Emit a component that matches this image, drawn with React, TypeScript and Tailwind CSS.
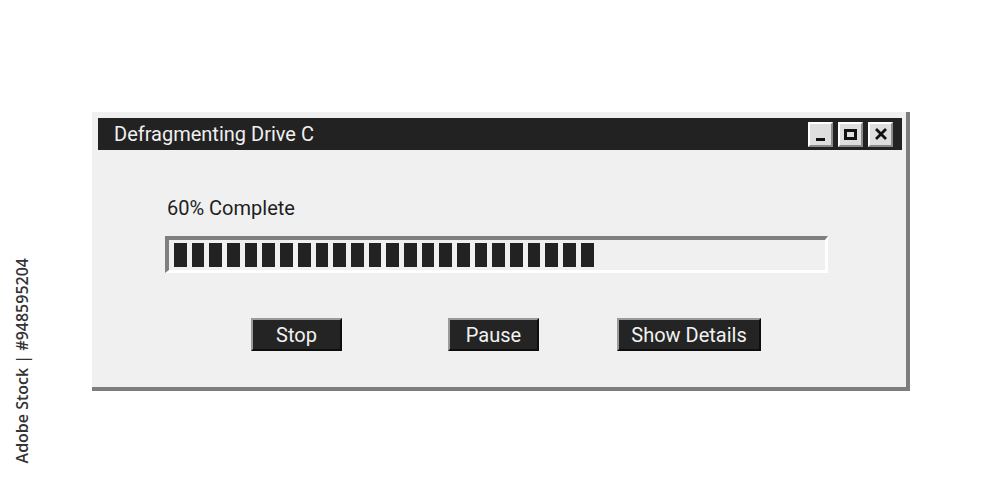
const TitleButton = ({ children }: { children: React.ReactNode }) => (
  <div className="flex h-[25px] w-[25px] items-center justify-center border-2 border-t-white border-l-white border-r-[#8a8a8a] border-b-[#8a8a8a] bg-[#dedede]">
    {children}
  </div>
);

const ActionButton = ({ label, className = "" }: { label: string; className?: string }) => (
  <button
    type="button"
    className={`flex h-[33px] items-center justify-center border-2 border-t-[#9a9a9a] border-l-[#9a9a9a] border-r-[#0e0e0e] border-b-[#0e0e0e] bg-[#242424] text-[20px] leading-none text-[#f2f2f2] ${className}`}
  >
    {label}
  </button>
);

export default function App() {
  const blocks = Array.from({ length: 24 });

  return (
    <div className="relative h-[500px] w-[1000px] overflow-hidden bg-white font-['Roboto',sans-serif]">
      <div className="ml-[92px] pt-[112px]">
        <div className="h-[279px] w-[818px] border-r-4 border-b-4 border-[#7d7d7d] bg-[#f0f0f0] pt-[6px] pr-[4px] pl-[6px]">
          <div className="flex h-[32px] items-center justify-between bg-[#222222] pr-[9px] pl-[16px]">
            <span className="text-[20px] leading-none text-[#f0f0f0]">Defragmenting Drive C</span>
            <div className="flex gap-[5px]">
              <TitleButton>
                <div className="mt-[10px] h-[3px] w-[9px] bg-[#111]" />
              </TitleButton>
              <TitleButton>
                <div className="h-[11px] w-[13px] border-[3px] border-[#111]" />
              </TitleButton>
              <TitleButton>
                <svg viewBox="0 0 12 12" className="h-[12px] w-[12px]" stroke="#111" strokeWidth="2.8" strokeLinecap="square">
                  <path d="M2 2l8 8M10 2l-8 8" />
                </svg>
              </TitleButton>
            </div>
          </div>

          <div className="pl-[67px]">
            <p className="mt-[46px] ml-[2px] text-[20px] leading-[24px] text-[#1e1e1e]">60% Complete</p>

            <div className="mt-[16px] flex h-[37px] w-[663px] gap-[5px] border-t-4 border-l-4 border-r-[3px] border-b-[3px] border-t-[#7f7f7f] border-l-[#7f7f7f] border-r-white border-b-white bg-[#f0f0f0] pt-[3px] pl-[5px]">
              {blocks.map((_, i) => (
                <div key={i} className="h-[24px] w-[12.7px] shrink-0 bg-[#222222]" />
              ))}
            </div>

            <div className="mt-[45px] flex">
              <ActionButton label="Stop" className="ml-[86px] w-[91px]" />
              <ActionButton label="Pause" className="ml-[106px] w-[91px]" />
              <ActionButton label="Show Details" className="ml-[78px] w-[144px]" />
            </div>
          </div>
        </div>
      </div>

      <div className="absolute top-[258px] left-[11px] rotate-180 font-['Open_Sans',sans-serif] text-[16px] leading-[22px] font-semibold text-[#333] [writing-mode:vertical-rl]">
        Adobe Stock | #948595204
      </div>
    </div>
  );
}
